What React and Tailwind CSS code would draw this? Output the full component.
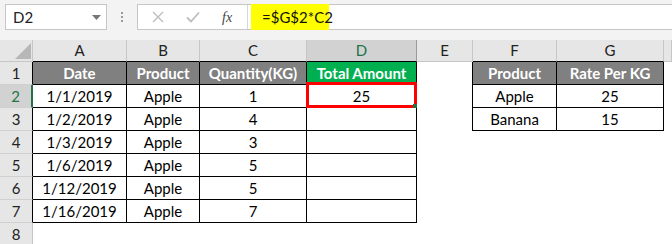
import React from 'react'

const COLS = ['', 'A', 'B', 'C', 'D', 'E', 'F', 'G', '']

const ROWS = [
  ['Date', 'Product', 'Quantity(KG)', 'Total Amount', '', 'Product', 'Rate Per KG', ''],
  ['1/1/2019', 'Apple', '1', '25', '', 'Apple', '25', ''],
  ['1/2/2019', 'Apple', '4', '', '', 'Banana', '15', ''],
  ['1/3/2019', 'Apple', '3', '', '', '', '', ''],
  ['1/6/2019', 'Apple', '5', '', '', '', '', ''],
  ['1/12/2019', 'Apple', '5', '', '', '', '', ''],
  ['1/16/2019', 'Apple', '7', '', '', '', '', ''],
  ['', '', '', '', '', '', '', ''],
]

function inMain(r, c) {
  return r >= 1 && r <= 7 && c >= 1 && c <= 4
}
function inRate(r, c) {
  return r >= 1 && r <= 3 && (c === 6 || c === 7)
}

function HeaderCell({ c }) {
  if (c === 0) {
    return (
      <div className="bg-[#e6e6e6] border-r border-b border-[#c6c6c6] relative">
        <svg className="absolute left-[15px] top-[3px]" width="16" height="16" viewBox="0 0 16 16">
          <polygon points="16,0 16,16 0,16" fill="#b7b7b7" />
        </svg>
      </div>
    )
  }
  const selected = c === 4
  const blackBottom = (c >= 1 && c <= 4) || c === 6 || c === 7
  return (
    <div
      className={`flex items-center justify-center border-r ${blackBottom ? 'border-b border-b-black' : 'border-b border-b-[#c6c6c6]'} ${selected ? 'bg-[#d2d2d2] text-[#217346] border-r-[#9b9b9b]' : 'bg-[#e6e6e6] text-[#222] border-r-[#c6c6c6]'}`}
    >
      {COLS[c]}
    </div>
  )
}

function RowHead({ r }) {
  const selected = r === 2
  const inTable = r >= 1 && r <= 7
  return (
    <div
      className={`flex items-center justify-center border-b border-b-[#d0d0d0] ${selected ? 'bg-[#d2d2d2] text-[#217346] border-r-2 border-r-[#217346]' : inTable ? 'bg-[#e6e6e6] text-[#222] border-r border-r-black' : 'bg-[#e6e6e6] text-[#222] border-r border-r-[#c6c6c6]'}`}
    >
      {r}
    </div>
  )
}

function Cell({ r, c, value }) {
  const table = inMain(r, c) || inRate(r, c)
  const header = r === 1 && table
  const green = r === 1 && c === 4
  const edgeLeftOfRate = c === 5 && r >= 1 && r <= 3

  let cls = 'relative flex items-center justify-center whitespace-nowrap '
  if (table) cls += 'border-r border-b border-black '
  else if (edgeLeftOfRate) cls += 'border-r border-r-black '
  if (green) cls += 'bg-[#00b050] text-white font-bold '
  else if (header) cls += 'bg-[#808080] text-white font-bold '
  else cls += 'bg-white text-black '

  return (
    <div className={cls}>
      {value}
      {r === 2 && c === 4 && (
        <>
          <div className="absolute -top-[3px] -left-[1px] -right-[1px] -bottom-px border-[3px] border-[#ff0000]" />
          <div className="absolute -right-[2px] -bottom-[2px] w-[5px] h-[5px] bg-[#217346]" />
        </>
      )}
    </div>
  )
}

export default function App() {
  return (
    <div className="w-[672px] h-[244px] overflow-hidden bg-white font-['Lato','Noto_Sans',sans-serif] text-[15px]">
      {/* Formula bar */}
      <div className="h-[40px] bg-[#f3f3f3] flex items-start pt-[4px]">
        <div className="ml-[5px] w-[102px] h-[26px] bg-white border border-[#c6c6c6] flex items-center justify-between pl-[7px] pr-[5px]">
          <span className="text-[15px] text-[#222]">D2</span>
          <svg width="9" height="5" viewBox="0 0 9 5">
            <polygon points="0,0 9,0 4.5,5" fill="#777" />
          </svg>
        </div>
        <div className="w-[30px] h-[26px] flex flex-col items-center justify-center gap-[2px]">
          <span className="w-[2px] h-[2px] bg-[#9a9a9a]" />
          <span className="w-[2px] h-[2px] bg-[#9a9a9a]" />
          <span className="w-[2px] h-[2px] bg-[#9a9a9a]" />
        </div>
        <div className="flex-1 h-[26px] bg-white border border-r-0 border-[#c6c6c6] flex">
          <div className="w-[110px] h-full flex items-center border-r border-[#d6d6d6]">
            <svg className="ml-[14px]" width="12" height="12" viewBox="0 0 12 12">
              <path d="M1 1 L11 11 M11 1 L1 11" stroke="#bdbdbd" strokeWidth="1.4" fill="none" />
            </svg>
            <svg className="ml-[22px]" width="14" height="12" viewBox="0 0 14 12">
              <path d="M1 6.5 L5 10.5 L13 1.5" stroke="#bdbdbd" strokeWidth="1.8" fill="none" />
            </svg>
            <span className="ml-[22px] text-[14px] italic text-[#444] font-['Liberation_Serif',serif]">fx</span>
          </div>
          <div className="flex-1 h-full relative">
            <div className="absolute left-[3px] -top-px h-[26px] w-[78px] bg-[#ffff00] flex items-center pl-[11px] text-[15px] text-[#111]">
              =$G$2*C2
            </div>
          </div>
        </div>
      </div>

      {/* Sheet */}
      <div className="grid grid-cols-[33px_94px_73px_107px_110px_56px_84px_107px_1fr] grid-rows-[22px_repeat(8,23px)]">
        {COLS.map((_, c) => (
          <HeaderCell key={'h' + c} c={c} />
        ))}
        {ROWS.map((row, i) => {
          const r = i + 1
          return (
            <React.Fragment key={r}>
              <RowHead r={r} />
              {row.map((v, j) => (
                <Cell key={j} r={r} c={j + 1} value={v} />
              ))}
            </React.Fragment>
          )
        })}
      </div>
    </div>
  )
}
